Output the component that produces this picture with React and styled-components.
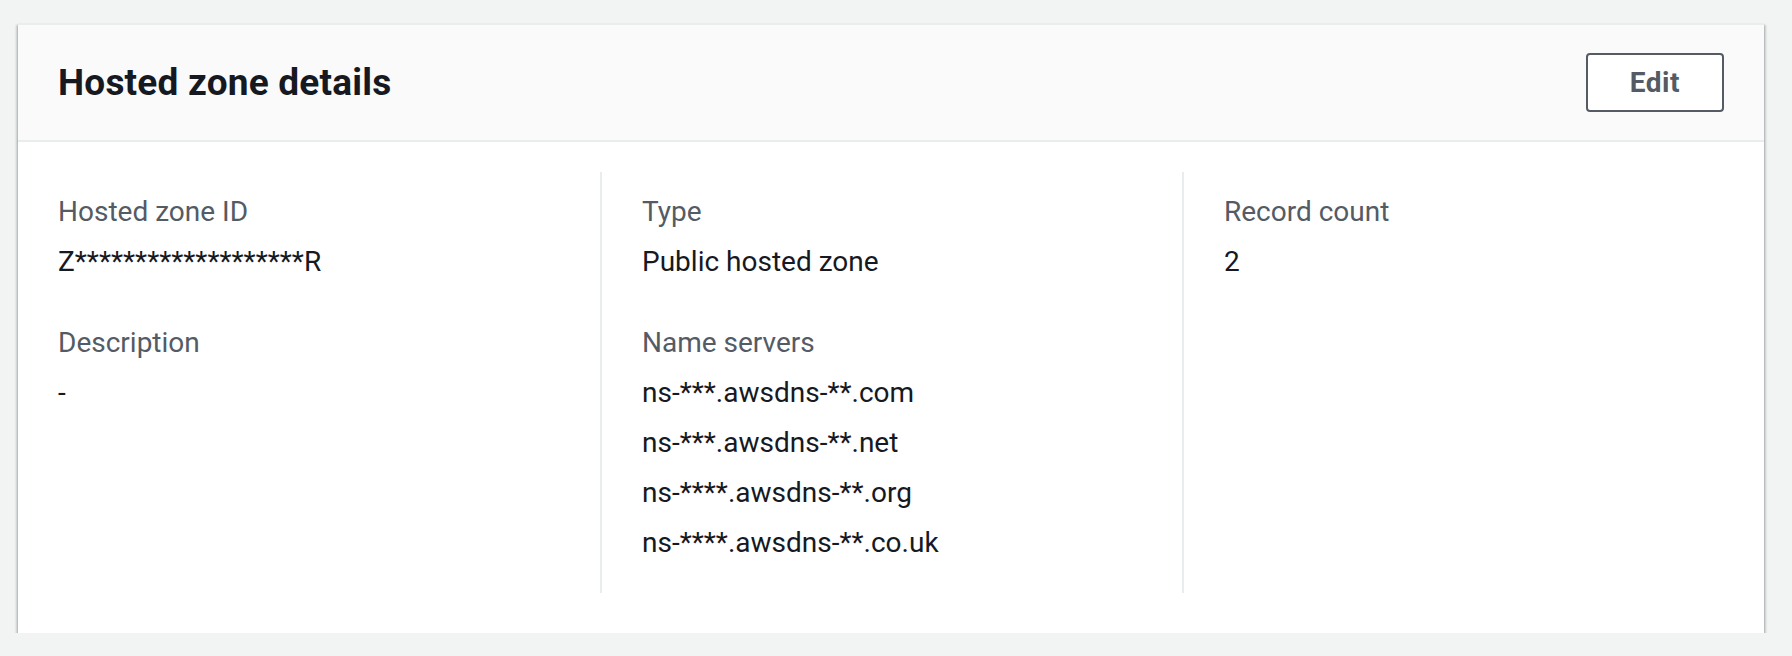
import React from 'react'
import styled, { createGlobalStyle } from 'styled-components'

const GlobalStyle = createGlobalStyle`
  body {
    margin: 0;
    background: #f2f3f3;
    font-family: Roboto, "Liberation Sans", sans-serif;
    -webkit-font-smoothing: antialiased;
  }
`;

const details = [
  [
    { label: 'Hosted zone ID', values: ['Z*******************R'] },
    { label: 'Description', values: ['-'] },
  ],
  [
    { label: 'Type', values: ['Public hosted zone'] },
    {
      label: 'Name servers',
      values: [
        'ns-***.awsdns-**.com',
        'ns-***.awsdns-**.net',
        'ns-****.awsdns-**.org',
        'ns-****.awsdns-**.co.uk',
      ],
    },
  ],
  [
    { label: 'Record count', values: ['2'] },
  ],
];

const App = () => {
  return (
    <Page>
      <GlobalStyle />
      <Card>
        <Header>
          <Title>Hosted zone details</Title>
          <EditButton type="button">Edit</EditButton>
        </Header>
        <Body>
          {details.map((column, i) => (
            <Column key={i} divided={i > 0}>
              {column.map((item) => (
                <Pair key={item.label}>
                  <Label>{item.label}</Label>
                  {item.values.map((v) => (
                    <Value key={v}>{v}</Value>
                  ))}
                </Pair>
              ))}
            </Column>
          ))}
        </Body>
      </Card>
    </Page>
  )
}

export default App

const Page = styled.div`
  padding: 23px 28px 0 18px;
`;

const Card = styled.div`
  background: #ffffff;
  border-top: 2px solid #eaeded;
  box-shadow: 0 2px 2px 0 rgba(0, 28, 36, 0.35),
    2px 2px 2px 0 rgba(0, 28, 36, 0.15),
    -2px 2px 2px 0 rgba(0, 28, 36, 0.15);
`;

const Header = styled.div`
  display: flex;
  align-items: center;
  justify-content: space-between;
  padding: 28px 40px;
  background: #fafafa;
  border-bottom: 2px solid #eaeded;
`;

const Title = styled.h2`
  margin: 0;
  font-size: 37px;
  font-weight: 700;
  line-height: 44px;
  letter-spacing: 0.2px;
  color: #16191f;
`;

const EditButton = styled.button`
  height: 59px;
  padding: 0 42px;
  background: #ffffff;
  border: 2px solid #545b64;
  border-radius: 4px;
  font-family: inherit;
  font-size: 28px;
  font-weight: 700;
  letter-spacing: 0.5px;
  color: #545b64;
  cursor: pointer;
`;

const Body = styled.div`
  display: grid;
  grid-template-columns: repeat(3, 1fr);
  padding: 30px 0 40px;
`;

const Column = styled.div`
  display: flex;
  flex-direction: column;
  gap: 31px;
  padding: 15px 40px 25px;
  border-left: ${props => props.divided ? '2px solid #eaeded' : 'none'};
`;

const Pair = styled.div`
  display: flex;
  flex-direction: column;
`;

const Label = styled.div`
  font-size: 28px;
  line-height: 50px;
  color: #545b64;
`;

const Value = styled.div`
  font-size: 28px;
  line-height: 50px;
  color: #16191f;
`;
